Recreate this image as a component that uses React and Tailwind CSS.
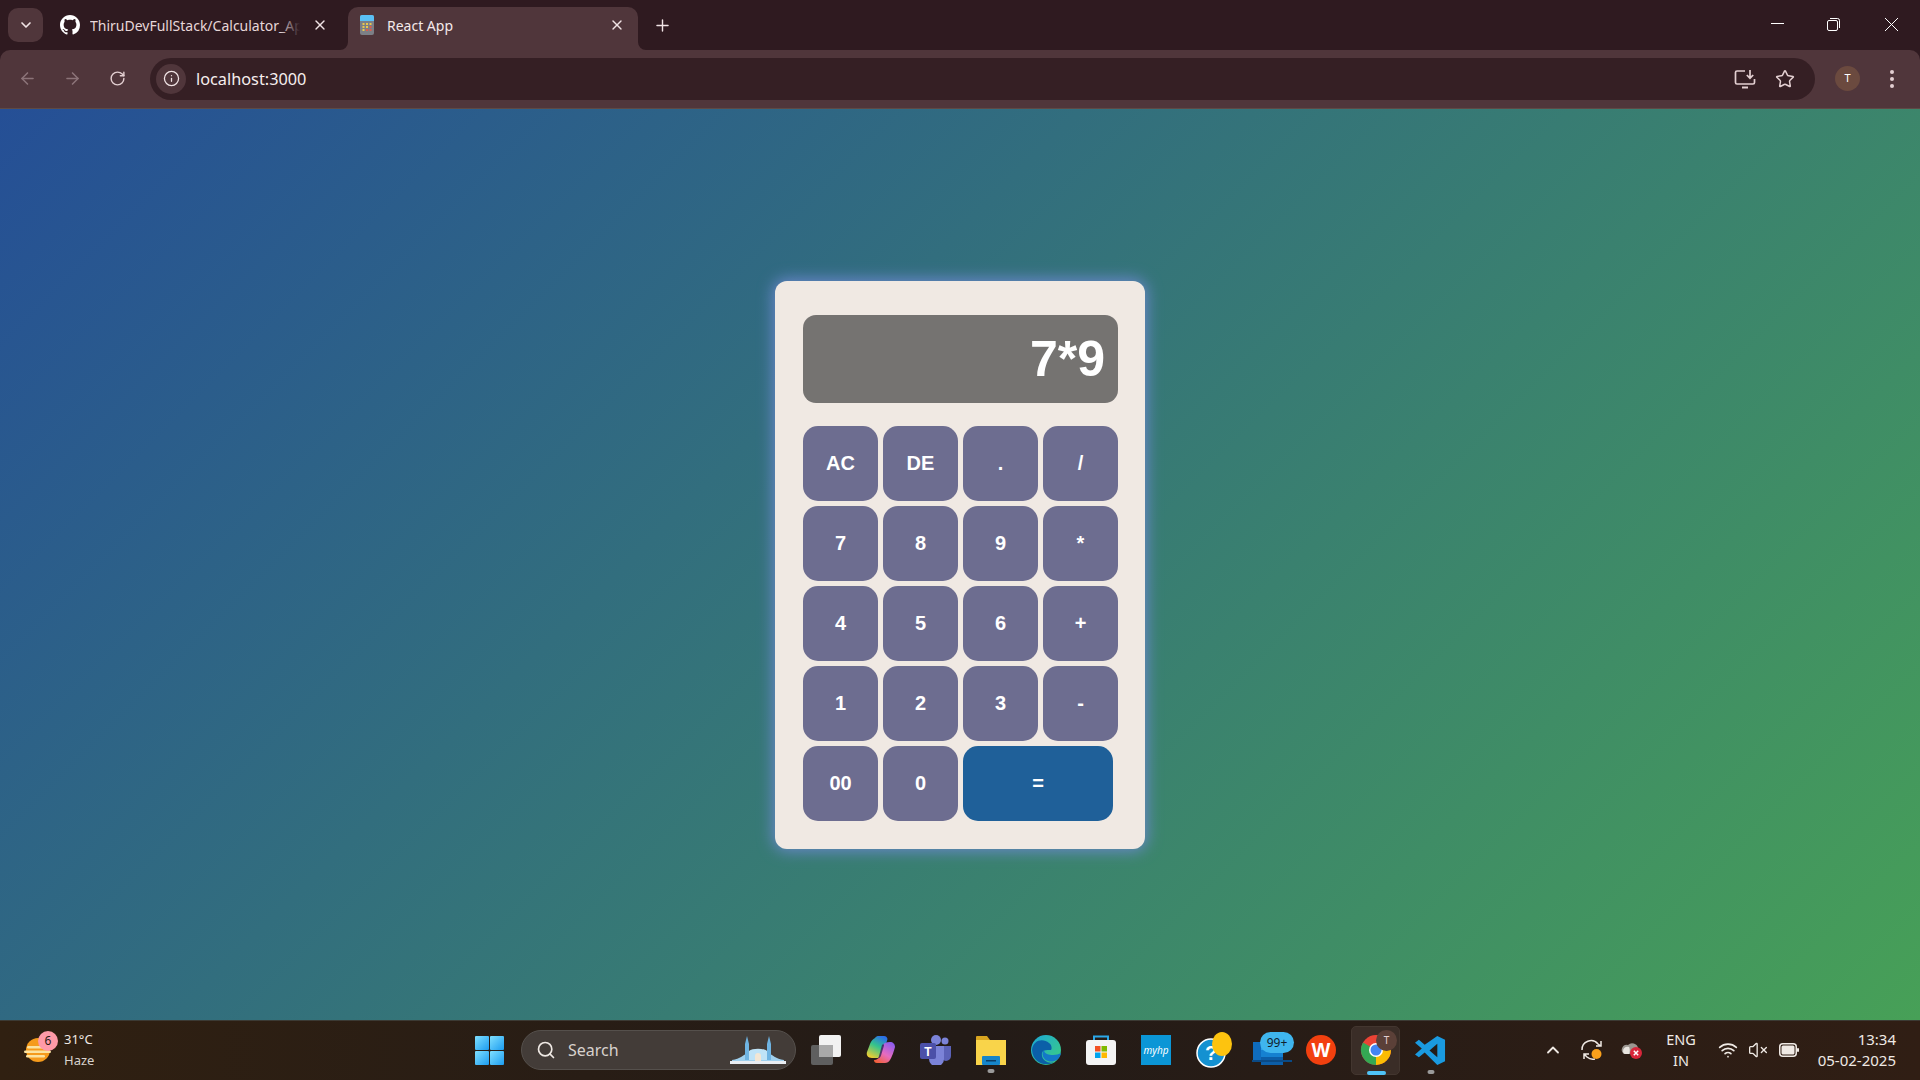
import { Search, X, Plus, ChevronDown, ArrowLeft, ArrowRight, RotateCw, Info, Star, ChevronUp, Wifi, VolumeX } from "lucide-react";

const uiFont = { fontFamily: '"Noto Sans", "Open Sans", sans-serif' };

const KEYS = ["AC", "DE", ".", "/", "7", "8", "9", "*", "4", "5", "6", "+", "1", "2", "3", "-", "00", "0"];

function GithubIcon() {
  return (
    <svg viewBox="0 0 16 16" className="w-5 h-5 shrink-0" fill="#ffffff">
      <path d="M8 0C3.58 0 0 3.58 0 8c0 3.54 2.29 6.53 5.47 7.59.4.07.55-.17.55-.38 0-.19-.01-.82-.01-1.49-2.01.37-2.53-.49-2.69-.94-.09-.23-.48-.94-.82-1.13-.28-.15-.68-.52-.01-.53.63-.01 1.08.58 1.23.82.72 1.21 1.87.87 2.33.66.07-.52.28-.87.51-1.07-1.78-.2-3.64-.89-3.64-3.95 0-.87.31-1.59.82-2.15-.08-.2-.36-1.02.08-2.12 0 0 .67-.21 2.2.82.64-.18 1.32-.27 2-.27s1.36.09 2 .27c1.53-1.04 2.2-.82 2.2-.82.44 1.1.16 1.92.08 2.12.51.56.82 1.27.82 2.15 0 3.07-1.87 3.75-3.65 3.95.29.25.54.73.54 1.48 0 1.07-.01 1.93-.01 2.2 0 .21.15.46.55.38A8.01 8.01 0 0 0 16 8c0-4.42-3.58-8-8-8z" />
    </svg>
  );
}

function CalcFavicon() {
  return (
    <svg viewBox="0 0 14 20" className="w-[14px] h-5 shrink-0">
      <rect width="14" height="20" rx="2" fill="#7c7f86" />
      <path d="M0 6V2a2 2 0 0 1 2-2h10a2 2 0 0 1 2 2v4z" fill="#5ac0f5" />
      <g fill="#e8c84e">
        <rect x="2.5" y="8" width="2" height="2" />
        <rect x="6" y="8" width="2" height="2" />
        <rect x="9.500" y="8" width="2" height="2" />
        <rect x="2.500" y="11" width="2" height="2" />
        <rect x="6" y="11" width="2" height="2" />
        <rect x="2.500" y="14" width="2" height="2" />
      </g>
      <rect x="9.500" y="11" width="2" height="2" fill="#e05a4a" />
      <rect x="6" y="14" width="2" height="2" fill="#e05a4a" />
      <rect x="9.500" y="14" width="2" height="2" fill="#e05a4a" />
    </svg>
  );
}

function InstallIcon() {
  return (
    <svg viewBox="0 0 22 20" className="w-[22px] h-5" fill="none" stroke="#e3cfd1" strokeWidth="1.7">
      <path d="M11 2H3a1.500 1.500 0 0 0-1.500 1.500v10A1.500 1.500 0 0 0 3 15h16a1.500 1.500 0 0 0 1.500-1.500V10" />
      <path d="M8 18.500h6" strokeWidth="2" />
      <path d="M16 1v8M12.800 6l3.200 3.200L19.200 6" />
    </svg>
  );
}

function TabCorner({ side }) {
  return (
    <svg viewBox="0 0 8 8" className={`absolute bottom-0 w-2 h-2 ${side === "left" ? "-left-2" : "-right-2 -scale-x-100"}`}>
      <path d="M8 0v8H0a8 8 0 0 0 8-8z" fill="#50363b" />
    </svg>
  );
}

function TabStrip() {
  return (
    <div className="h-[50px] bg-[#2f1a20] flex items-end pl-2 relative shrink-0">
      <div className="self-start mt-[8px] w-[35px] h-[34px] rounded-[10px] bg-[#50363b] flex items-center justify-center">
        <ChevronDown size={16} color="#f1e4e5" strokeWidth={2.5} />
      </div>
      <div className="ml-[17px] w-[288px] h-[43px] pb-[7px] flex items-center relative">
        <GithubIcon />
        <div className="ml-[10px] w-[210px] relative overflow-hidden whitespace-nowrap text-[14px] text-[#e7d7d9]" style={uiFont}>
          ThiruDevFullStack/Calculator_App
          <div className="absolute right-0 top-0 bottom-0 w-5 bg-gradient-to-r from-transparent to-[#2f1a20]" />
        </div>
        <X size={16} color="#f1e4e5" strokeWidth={2} className="ml-[12px]" />
      </div>
      <div className="relative w-[290px] h-[43px] pb-[7px] bg-[#50363b] rounded-t-[10px] flex items-center pl-3">
        <TabCorner side="left" />
        <TabCorner side="right" />
        <CalcFavicon />
        <span className="ml-[13px] text-[14px] text-[#f4e9ea]" style={uiFont}>React App</span>
        <X size={16} color="#f1e4e5" strokeWidth={2} className="ml-auto mr-[13px]" />
      </div>
      <Plus size={19} color="#f1e4e5" strokeWidth={1.8} className="ml-[15px] mb-[15px]" />
      <div className="ml-auto self-start mt-[18px] flex items-center">
        <div className="w-[13px] h-px bg-white mb-[2px]" />
        <svg viewBox="0 0 13 13" className="w-[13px] h-[13px] ml-[43px]" fill="none" stroke="#fff" strokeWidth="1">
          <rect x="0.500" y="2.500" width="10" height="10" rx="1.500" />
          <path d="M3 0.500h7.500a2 2 0 0 1 2 2V10" />
        </svg>
        <svg viewBox="0 0 13 13" className="w-[13px] h-[13px] ml-[45px] mr-[22px]" stroke="#fff" strokeWidth="1">
          <path d="M0 0l13 13M13 0L0 13" />
        </svg>
      </div>
    </div>
  );
}

function Toolbar() {
  return (
    <div className="h-[59px] bg-[#2f1a20] shrink-0">
      <div className="h-[59px] bg-[#50363b] rounded-t-[10px] border-b border-[#5e4a45] flex items-center pb-[1px]">
        <ArrowLeft size={19} color="#8b7378" strokeWidth={2} className="ml-[18px]" />
        <ArrowRight size={19} color="#8b7378" strokeWidth={2} className="ml-[26px]" />
        <RotateCw size={17} color="#e3cfd1" strokeWidth={2} className="ml-[27px]" />
        <div className="ml-[24px] w-[1665px] h-[42px] rounded-full bg-[#351f24] flex items-center pl-[6px]">
          <div className="w-[30px] h-[30px] rounded-full bg-[#50363b] flex items-center justify-center">
            <Info size={17} color="#f1e4e5" strokeWidth={1.8} />
          </div>
          <span className="ml-[10px] pt-[2px] text-[16.3px] text-[#f6eeee]" style={uiFont}>localhost:3000</span>
          <div className="ml-auto flex items-center mr-[20px]">
            <InstallIcon />
            <Star size={20} color="#e3cfd1" strokeWidth={1.8} className="ml-[19px]" />
          </div>
        </div>
        <div className="ml-[20px] w-[25px] h-[25px] rounded-full bg-[#6b4a3f] flex items-center justify-center text-[11px] text-white" style={uiFont}>T</div>
        <div className="ml-[30px] flex flex-col gap-[3px]">
          <div className="w-1 h-1 rounded-full bg-[#e3cfd1]" />
          <div className="w-1 h-1 rounded-full bg-[#e3cfd1]" />
          <div className="w-1 h-1 rounded-full bg-[#e3cfd1]" />
        </div>
      </div>
    </div>
  );
}

function Calculator() {
  return (
    <div className="w-[370px] bg-[#f0e9e3] rounded-[12px] pt-[34px] pb-[28px] pl-[28px] pr-[27px] shadow-[0_0_15px_2px_#6b88cc]" style={{ fontFamily: '"Liberation Sans", Arial, sans-serif' }}>
      <div className="h-[88px] bg-[#757371] rounded-[13px] mb-[23px] flex items-center justify-end pr-[13px] text-[50px] font-bold text-white">
        7*9
      </div>
      <div className="grid grid-cols-4 gap-[5px]">
        {KEYS.map((k) => (
          <button key={k} type="button" className="h-[75px] pb-[2px] rounded-[15px] bg-[#6d6d90] text-white text-[20px] font-bold">
            {k}
          </button>
        ))}
        <button type="button" className="col-span-2 w-[150px] h-[75px] pb-[2px] rounded-[15px] bg-[#1f6099] text-white text-[20px] font-bold">
          =
        </button>
      </div>
    </div>
  );
}

function WeatherIcon() {
  return (
    <div className="relative w-[28px] h-[28px] shrink-0">
      <svg viewBox="0 0 28 28" className="w-full h-full">
        <circle cx="14" cy="14" r="12" fill="#f59b1c" />
        <g fill="#fbe3a0">
          <rect x="3" y="10" width="20" height="2.500" rx="1.200" />
          <rect x="0" y="14.500" width="27" height="2.500" rx="1.200" />
          <rect x="2" y="19" width="19" height="2.500" rx="1.200" />
        </g>
      </svg>
      <div className="absolute -top-[5px] left-[14px] w-5 h-5 rounded-full bg-[#ff9aa8] text-[#2a1a14] text-[12px] flex items-center justify-center" style={uiFont}>6</div>
    </div>
  );
}

function WindowsLogo() {
  return (
    <svg viewBox="0 0 29 29" className="w-[29px] h-[29px] shrink-0">
      <defs>
        <linearGradient id="winA" x1="0" y1="0" x2="1" y2="1">
          <stop offset="0" stopColor="#7fe0ff" />
          <stop offset="1" stopColor="#1c9cf0" />
        </linearGradient>
      </defs>
      <rect x="0" y="0" width="14" height="14" rx="1" fill="url(#winA)" />
      <rect x="15" y="0" width="14" height="14" rx="1" fill="url(#winA)" />
      <rect x="0" y="15" width="14" height="14" rx="1" fill="url(#winA)" />
      <rect x="15" y="15" width="14" height="14" rx="1" fill="url(#winA)" />
    </svg>
  );
}

function Mosque() {
  return (
    <svg viewBox="0 0 56 28" className="w-[56px] h-[28px]">
      <path d="M2 24c8-1 12-5 16-8h20c4 3 8 7 16 8v2H2z" fill="#9fd0ee" />
      <path d="M15 24V8l2-8 2 8v16zM37 24V8l2-8 2 8v16z" fill="#6fb4e2" />
      <path d="M19 24v-9c3-3 15-3 18 0v9z" fill="#bfe3f7" />
      <path d="M25 25v-5a3 3 0 0 1 6 0v5z" fill="#f3e6d4" />
      <path d="M0 25h56v3H0z" fill="#e9edf2" />
    </svg>
  );
}

function TaskView() {
  return (
    <svg viewBox="0 0 30 30" className="w-[30px] h-[30px]">
      <rect x="0" y="10" width="22" height="20" rx="2" fill="#5f5f5f" />
      <rect x="8" y="0" width="22" height="22" rx="2" fill="#f2f2f2" />
      <rect x="8" y="10" width="14" height="12" fill="#a9a9a9" />
    </svg>
  );
}

function Copilot() {
  return (
    <svg viewBox="0 0 30 30" className="w-[30px] h-[30px]">
      <defs>
        <linearGradient id="copA" x1="0.700" y1="0" x2="0.200" y2="1">
          <stop offset="0" stopColor="#2b6fe8" />
          <stop offset="0.45" stopColor="#34c48c" />
          <stop offset="1" stopColor="#f5cf2e" />
        </linearGradient>
        <linearGradient id="copB" x1="0.800" y1="0" x2="0.200" y2="1">
          <stop offset="0" stopColor="#8a5cf0" />
          <stop offset="0.55" stopColor="#e66cc0" />
          <stop offset="1" stopColor="#f2603a" />
        </linearGradient>
      </defs>
      <path d="M9 3c1-1.500 2-2 4-2h5c2 0 3 1 3.500 3L18 16c-1 3-3 6-6 7H6c-4 0-6-3-5-6l3-8c1-3 3-5 5-6z" fill="url(#copA)" />
      <path d="M24 7c3 0 5 2 5 5-1 4-3 10-5 13-1 2-3 3-5 3h-8c-2 0-3-1-3-3 3 0 5-2 6-5l3-10c1-2 3-3 7-3z" fill="url(#copB)" />
      <path d="M16 10c1-1 2-1 2 .500l-3 10c-.500 2-2 3-3 3 1-2 1-3 2-6z" fill="#34205a" opacity="0.8" />
    </svg>
  );
}

function Teams() {
  return (
    <svg viewBox="0 0 32 30" className="w-[32px] h-[30px]">
      <circle cx="25" cy="6" r="3.500" fill="#7b83d8" />
      <circle cx="16" cy="5" r="5" fill="#7b83d8" />
      <path d="M20 11h11v10a5 5 0 0 1-10 0z" fill="#5b62b8" />
      <path d="M9 11h15v13a6 6 0 0 1-15 0z" fill="#7b83d8" />
      <rect x="0" y="8" width="16" height="16" rx="2" fill="#4b50a8" />
      <text x="8" y="21" textAnchor="middle" fontSize="12" fontWeight="700" fill="#fff" fontFamily="Liberation Sans">T</text>
    </svg>
  );
}

function Explorer() {
  return (
    <svg viewBox="0 0 30 30" className="w-[30px] h-[30px]">
      <path d="M0 2a1 1 0 0 1 1-1h10l3 4h16v6H0z" fill="#d9a520" />
      <path d="M0 5h30v25H0z" fill="#f9d44a" />
      <rect x="6" y="21" width="18" height="9" rx="1" fill="#1685c9" />
      <rect x="10" y="25" width="10" height="1.500" fill="#0a3d66" />
    </svg>
  );
}

function Edge() {
  return (
    <svg viewBox="0 0 30 30" className="w-[30px] h-[30px]">
      <defs>
        <linearGradient id="edgeA" x1="0" y1="0" x2="1" y2="1">
          <stop offset="0" stopColor="#1aa6d8" />
          <stop offset="1" stopColor="#3fd07a" />
        </linearGradient>
      </defs>
      <circle cx="15" cy="15" r="15" fill="url(#edgeA)" />
      <path d="M1 15C2 5 12 3 18 8c3 2 3 6 2 7-6 0-10 0-9 6 1 5 7 8 12 6-7 5-21 2-22-12z" fill="#0b5fa8" />
      <path d="M30 18c-1 7-8 10-13 8-5-1-7-8-4-11 0 4 5 5 9 5 3 0 6-1 8-2z" fill="#1478c8" />
    </svg>
  );
}

function Store() {
  return (
    <svg viewBox="0 0 30 30" className="w-[30px] h-[30px]">
      <path d="M8 6V1.500h14V6" fill="none" stroke="#2ba7e8" strokeWidth="2" />
      <rect x="0" y="5" width="30" height="25" rx="3" fill="#f4f4f4" />
      <rect x="9" y="11" width="5.500" height="5.500" fill="#f25022" />
      <rect x="15.500" y="11" width="5.500" height="5.500" fill="#7fba00" />
      <rect x="9" y="17.500" width="5.500" height="5.500" fill="#00a4ef" />
      <rect x="15.500" y="17.500" width="5.500" height="5.500" fill="#ffb900" />
    </svg>
  );
}

function MyHp() {
  return (
    <div className="w-[30px] h-[30px] bg-[#0b96d6] flex items-center justify-center text-[10px] italic text-white" style={uiFont}>myhp</div>
  );
}

function Help() {
  return (
    <div className="relative w-[36px] h-[36px]">
      <svg viewBox="0 0 36 36" className="w-[36px] h-[36px]">
        <circle cx="15" cy="21" r="14" fill="#1491d1" stroke="#fff" strokeWidth="1.500" />
        <text x="15" y="28" textAnchor="middle" fontSize="20" fontWeight="700" fill="#fff" fontFamily="Liberation Sans">?</text>
        <ellipse cx="26" cy="12" rx="10" ry="12" fill="#fdc30f" />
      </svg>
    </div>
  );
}

function OutlookBadge() {
  return (
    <div className="relative w-[40px] h-[36px]">
      <svg viewBox="0 0 40 36" className="w-[40px] h-[36px]">
        <rect x="1" y="10" width="10" height="18" fill="#0f6cbd" />
        <rect x="9" y="10" width="28" height="8" fill="#2aa0e8" />
        <rect x="9" y="18" width="22" height="7" fill="#1581d1" />
        <rect x="9" y="25" width="22" height="8" fill="#0c5ea8" />
        <path d="M0 28h40v2H0z" fill="#0a4a86" />
      </svg>
      <div className="absolute top-0 left-[8px] w-[34px] h-[21px] rounded-full bg-[#3fb5ee] text-[#10202c] text-[12px] flex items-center justify-center" style={uiFont}>99+</div>
    </div>
  );
}

function Wps() {
  return (
    <svg viewBox="0 0 30 30" className="w-[30px] h-[30px]">
      <circle cx="15" cy="15" r="15" fill="#f2400f" />
      <text x="15" y="22" textAnchor="middle" fontSize="20" fontWeight="700" fill="#fff" fontFamily="Liberation Sans">W</text>
    </svg>
  );
}

function ChromeIcon() {
  return (
    <div className="relative w-[49px] h-[49px] rounded-[5px] bg-[#3a2d27] border border-[#43362f] flex items-center justify-center">
      <svg viewBox="0 0 32 32" className="w-[32px] h-[32px]">
        <circle cx="16" cy="16" r="15" fill="#ea4335" />
        <path d="M16 16L3 8.500A15 15 0 0 0 16 31z" fill="#34a853" />
        <path d="M16 16h15A15 15 0 0 1 16 31z" fill="#fbbc04" />
        <circle cx="16" cy="16" r="7" fill="#fff" />
        <circle cx="16" cy="16" r="5.500" fill="#4285f4" />
      </svg>
      <div className="absolute top-[3px] right-[2px] w-[21px] h-[21px] rounded-full bg-[#5b4038] text-[10px] text-[#e3cfd1] flex items-center justify-center" style={uiFont}>T</div>
      <div className="absolute -bottom-px left-[15px] w-[19px] h-[4px] rounded-full bg-[#4fc3f7]" />
    </div>
  );
}

function VsCode() {
  return (
    <svg viewBox="0 0 32 32" className="w-[31px] h-[31px]">
      <path d="M23 1l8 4v22l-8 4-13-13-6 5-4-3 7-6-7-6 4-3 6 5z" fill="#1a9ae0" />
      <path d="M23 9l-8 7 8 7z" fill="#231b17" />
    </svg>
  );
}

function RunningDot() {
  return <div className="absolute -bottom-[8px] left-1/2 -translate-x-1/2 w-[7px] h-[4px] rounded-full bg-[#9a9a9a]" />;
}

function SyncIcon() {
  return (
    <svg viewBox="0 0 24 24" className="w-[24px] h-[24px]" fill="none" stroke="#efe9e4" strokeWidth="1.500">
      <path d="M2 12a9 9 0 0 1 16-6l3 2M21 3v5h-5" />
      <path d="M4 21v-5h5M4 16l3 3a9 9 0 0 0 8 2" />
      <circle cx="16.500" cy="16" r="5" fill="#f9a01b" stroke="none" />
    </svg>
  );
}

function CloudErr() {
  return (
    <svg viewBox="0 0 22 20" className="w-[22px] h-5">
      <path d="M3 14a5 5 0 0 1 4-9 6 6 0 0 1 10 3v6z" fill="#9b9690" />
      <path d="M2 11c0-3 3-5 6-4 1 1 1 6 0 7H4c-1 0-2-1-2-3z" fill="#e8e4df" />
      <circle cx="15" cy="13" r="6" fill="#d8263a" />
      <path d="M12.800 10.800l4.400 4.400M17.200 10.800l-4.400 4.400" stroke="#fff" strokeWidth="1.500" />
    </svg>
  );
}

function BatteryIcon() {
  return (
    <svg viewBox="0 0 20 14" className="w-5 h-[14px]" fill="none">
      <rect x="0.750" y="0.750" width="16.500" height="12.500" rx="3" stroke="#efe9e4" strokeWidth="1.500" />
      <rect x="2.500" y="2.500" width="13" height="9" rx="1.500" fill="#efe9e4" />
      <rect x="18" y="5" width="2" height="4" rx="1" fill="#efe9e4" />
    </svg>
  );
}

function Taskbar() {
  return (
    <div className="h-[60px] shrink-0 border-t border-[#3c3a34] bg-gradient-to-r from-[#302011] via-[#231b17] to-[#301e14] flex items-center pb-px text-[#efe9e4]" style={uiFont}>
      <div className="ml-[24px]"><WeatherIcon /></div>
      <div className="ml-[12px] w-[60px] text-[13px] leading-[21px] pb-[1px]">
        <div>31°C</div>
        <div className="text-[#d8d2cd]">Haze</div>
      </div>
      <div className="ml-[351px]"><WindowsLogo /></div>
      <div className="ml-[17px] w-[275px] h-[40px] rounded-full bg-[#433c38] border border-[#55504c] flex items-center pl-[14px]">
        <Search size={20} color="#efe9e4" strokeWidth={2} />
        <span className="ml-[12px] text-[16px] text-[#d8d2cd]">Search</span>
        <div className="ml-auto mr-[9px]"><Mosque /></div>
      </div>
      <div className="ml-[15px]"><TaskView /></div>
      <div className="ml-[25px]"><Copilot /></div>
      <div className="ml-[24px]"><Teams /></div>
      <div className="ml-[24px] relative"><Explorer /><RunningDot /></div>
      <div className="ml-[25px]"><Edge /></div>
      <div className="ml-[25px]"><Store /></div>
      <div className="ml-[25px]"><MyHp /></div>
      <div className="ml-[25px]"><Help /></div>
      <div className="ml-[20px]"><OutlookBadge /></div>
      <div className="ml-[14px]"><Wps /></div>
      <div className="ml-[15px]"><ChromeIcon /></div>
      <div className="ml-[15px] relative"><VsCode /><RunningDot /></div>
      <ChevronUp size={20} color="#efe9e4" strokeWidth={2.2} className="ml-[97px]" />
      <div className="ml-[17px]"><SyncIcon /></div>
      <div className="ml-[17px]"><CloudErr /></div>
      <div className="ml-[21px] w-[34px] text-center text-[14.500px] leading-[21px]">
        <div>ENG</div>
        <div>IN</div>
      </div>
      <Wifi size={20} color="#efe9e4" strokeWidth={2} className="ml-[20px]" />
      <VolumeX size={20} color="#efe9e4" strokeWidth={1.6} className="ml-[10px]" />
      <div className="ml-[11px]"><BatteryIcon /></div>
      <div className="ml-auto mr-[24px] text-right text-[15px] leading-[21px]">
        <div>13:34</div>
        <div>05-02-2025</div>
      </div>
    </div>
  );
}

export default function App() {
  return (
    <div className="w-[1920px] h-[1080px] overflow-hidden flex flex-col">
      <TabStrip />
      <Toolbar />
      <main className="flex-1 bg-[linear-gradient(135deg,#254f96,#47a057)] flex items-center justify-center pt-px">
        <Calculator />
      </main>
      <Taskbar />
    </div>
  );
}
